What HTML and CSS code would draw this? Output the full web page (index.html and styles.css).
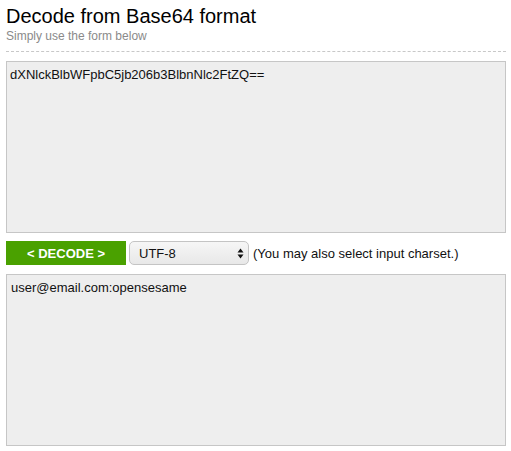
FILE: index.html
```html
<!DOCTYPE html>
<html>
<head>
<meta charset="utf-8">
<link rel="stylesheet" href="styles.css">
</head>
<body>
<div class="page">
  <header class="head">
    <h1 class="title">Decode from Base64 format</h1>
    <p class="subtitle">Simply use the form below</p>
  </header>
  <div class="field input-box">dXNlckBlbWFpbC5jb206b3BlbnNlc2FtZQ==</div>
  <div class="controls">
    <div class="btn">&lt; DECODE &gt;</div>
    <div class="select">
      <span class="select-text">UTF-8</span>
      <svg class="arrows" width="7" height="11" viewBox="0 0 7 11"><path d="M3.5 0.5 L6.5 4.5 L0.5 4.5 Z M3.5 10.5 L6.5 6.5 L0.5 6.5 Z" fill="#111"/></svg>
    </div>
    <span class="hint">(You may also select input charset.)</span>
  </div>
  <div class="field output-box">user@email.com:opensesame</div>
</div>
</body>
</html>
```

FILE: styles.css
```css
html, body {
  margin: 0;
  padding: 0;
  background: #fff;
}
.page {
  padding: 4px 5px 0 6px;
  font-family: "Liberation Sans", Arial, sans-serif;
  color: #000;
}
.head {
  border-bottom: 1px dashed #c8c8c8;
  padding-bottom: 7px;
  margin-bottom: 9px;
}
.title {
  margin: 0;
  font-size: 20px;
  font-weight: normal;
  line-height: 24px;
}
.subtitle {
  margin: 1px 0 0;
  font-size: 12px;
  line-height: 15px;
  color: #8a8a8a;
}
.field {
  box-sizing: border-box;
  width: 500px;
  height: 172px;
  background: #eeeeee;
  border: 1px solid #c6c6c6;
  padding: 5px 4px;
  font-size: 13px;
  line-height: 16px;
  color: #111;
}
.input-box {
  padding-left: 3px;
}
.controls {
  display: flex;
  align-items: center;
  margin: 8px 0 9px;
  height: 24px;
}
.btn {
  width: 120px;
  height: 24px;
  background: #4aa100;
  color: #fff;
  font-weight: bold;
  font-size: 13px;
  display: flex;
  align-items: center;
  justify-content: center;
}
.select {
  box-sizing: border-box;
  margin-left: 3px;
  width: 120px;
  height: 24px;
  border: 1px solid #c4c4c4;
  border-radius: 5px;
  background: linear-gradient(#f6f6f6, #e8e8e8);
  display: flex;
  align-items: center;
  justify-content: space-between;
  padding: 0 4px 0 9px;
  font-size: 13px;
  color: #111;
}
.arrows {
  display: block;
}
.hint {
  margin-left: 4px;
  font-size: 13px;
  color: #111;
}
```
